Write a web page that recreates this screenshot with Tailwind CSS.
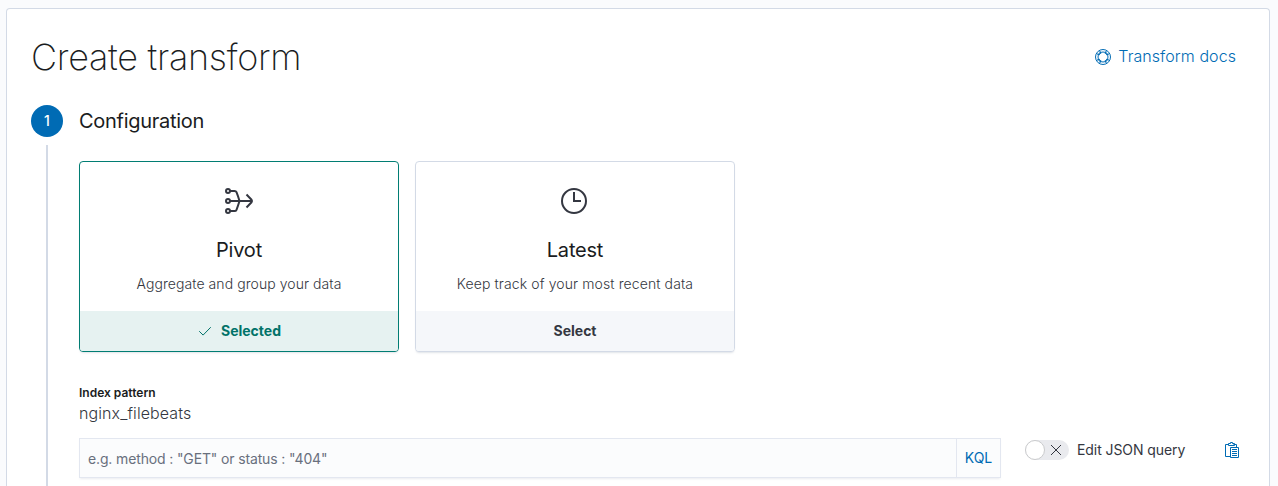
<!DOCTYPE html>
<html lang="en">
<head>
<meta charset="utf-8">
<title>Create transform</title>
<script src="https://cdn.jsdelivr.net/npm/@tailwindcss/browser@4"></script>
</head>
<body class="h-[486px] overflow-hidden bg-[#fafbfd] pt-2 pl-1.5 pr-2 font-['Inter',sans-serif] text-[#343741]">
<main class="flex h-[478px] flex-col rounded-t border border-b-0 border-[#d3dae6] bg-white px-6 pt-6">
  <header class="flex h-12 shrink-0 items-center justify-between">
    <h1 class="text-[36px] leading-[48px] font-extralight tracking-[-0.008em] text-[#1a1c21]">Create transform</h1>
    <a class="mr-[9px] flex items-center gap-2 text-base leading-6 font-light text-[#006bb4]">
      <svg class="-mr-px size-4" viewBox="0 0 16 16" fill="none" stroke="currentColor"><circle cx="8" cy="8" r="7.500"/><circle cx="8" cy="8" r="5"/><path stroke-width="1.400" d="M2.200 4.800l2.600.9M4.800 2.200l.9 2.600M11.200 2.200l-.9 2.600M13.800 4.800l-2.600.9M2.200 11.200l2.600-.9M4.800 13.800l.9-2.600M11.200 13.800l-.9-2.600M13.800 11.200l-2.600-.9"/></svg>
      <span class="-mt-0.5 tracking-[0.004em]">Transform docs</span>
    </a>
  </header>

  <section class="mt-6 flex min-h-0 grow gap-4">
    <div class="flex w-8 flex-col items-center gap-2">
      <div class="flex size-8 items-center justify-center rounded-full bg-[#006bb4] text-sm font-medium text-white">1</div>
      <div class="w-0.5 grow bg-[#d3dae6]"></div>
    </div>
    <div class="grow">
      <h2 class="text-xl leading-8 font-normal tracking-[-0.014em] text-[#1a1c21]">Configuration</h2>

      <div class="mt-6 flex gap-4">
        <article class="flex h-[191px] w-80 flex-col items-center rounded border border-[#017d73] bg-white pt-[23px] shadow-[0_2px_2px_-1px_rgba(152,162,179,0.3)]">
          <svg class="size-8" viewBox="0 0 32 32" fill="none" stroke="currentColor" stroke-width="2"><circle cx="5" cy="6" r="2"/><circle cx="5" cy="16" r="2"/><circle cx="5" cy="26" r="2"/><path d="M7 6h4.500q1.500 0 2 1.200Q15 11 16.500 16q-1.500 5-3 8.800-.5 1.200-2 1.200H7M7 16h22M23.500 9.500l5 5.200q1 1.300 0 2.600L23.500 22.500"/></svg>
          <h3 class="mt-[17px] text-xl leading-8 font-normal tracking-[-0.01em] text-[#1a1c21]">Pivot</h3>
          <p class="mt-2 text-sm leading-5 font-light tracking-[0.005em]">Aggregate and group your data</p>
          <div class="mt-auto flex h-10 w-full items-center justify-center gap-2 rounded-b-[3px] bg-[#e6f2f1] text-sm font-bold text-[#017369]">
            <svg class="size-4" viewBox="0 0 16 16" fill="none" stroke="currentColor" stroke-linecap="round" stroke-linejoin="round"><path d="M2.500 8.500l3.600 3.600 7.400-7.600"/></svg>
            <span>Selected</span>
          </div>
        </article>
        <article class="flex h-[191px] w-80 flex-col items-center rounded border border-[#d3dae6] bg-white pt-[23px] shadow-[0_2px_2px_-1px_rgba(152,162,179,0.3)]">
          <svg class="size-8" viewBox="0 0 32 32" fill="none" stroke="currentColor" stroke-width="2"><circle cx="15" cy="16" r="12"/><path d="M15 7v9h7"/></svg>
          <h3 class="mt-[17px] text-xl leading-8 font-normal tracking-[-0.01em] text-[#1a1c21]">Latest</h3>
          <p class="mt-2 text-sm leading-5 font-light tracking-[0.008em]">Keep track of your most recent data</p>
          <div class="mt-auto flex h-10 w-full items-center justify-center rounded-b-[3px] bg-[#f5f7fa] text-sm font-bold">Select</div>
        </article>
      </div>

      <div class="mt-8 flex flex-col">
        <span class="text-xs leading-[18px] font-semibold text-[#1a1c21]">Index pattern</span>
        <span class="text-base leading-[22px] font-light tracking-[0.006em]">nginx_filebeats</span>
      </div>

      <div class="mt-3.5 flex">
        <div class="flex h-10 w-[922px] border border-[#e3e7f0] bg-[#fbfcfd] shadow-[0_2px_2px_-1px_rgba(152,162,179,0.2)]">
          <div class="grow pt-px pl-2 text-sm leading-[38px] tracking-[-0.01em] text-[#69707d]">e.g. method : "GET" or status : "404"</div>
          <div class="w-[44px] border-l border-[#e3e7f0] text-center text-sm leading-[38px] font-normal text-[#006bb4]">KQL</div>
        </div>
        <div class="mt-0.5 ml-6 flex h-5 items-center gap-2">
          <div class="flex h-5 w-11 items-center justify-between rounded-full bg-[#e9eaee] pr-[5px]">
            <span class="size-5 rounded-full border border-[#cacbcd] bg-white"></span>
            <svg class="size-4" viewBox="0 0 16 16" fill="none" stroke="currentColor"><path d="M3 3l10 10M13 3L3 13"/></svg>
          </div>
          <span class="text-sm leading-5 font-normal tracking-[-0.006em]">Edit JSON query</span>
        </div>
        <svg class="mt-1 mr-[5px] ml-auto size-4 text-[#006bb4]" viewBox="0 0 16 16" fill="none" stroke="currentColor"><path d="M6.500 14.500h-5v-12h3M9.500 2.500h3v3M4.500 3.500v-2h2V.500h2v1h2v2z"/><path d="M6.500 5.500h8v10h-8zM8 7.500h5M8 9.500h5M8 11.500h5M8 13.500h5"/></svg>
      </div>
    </div>
  </section>
</main>
</body>
</html>
